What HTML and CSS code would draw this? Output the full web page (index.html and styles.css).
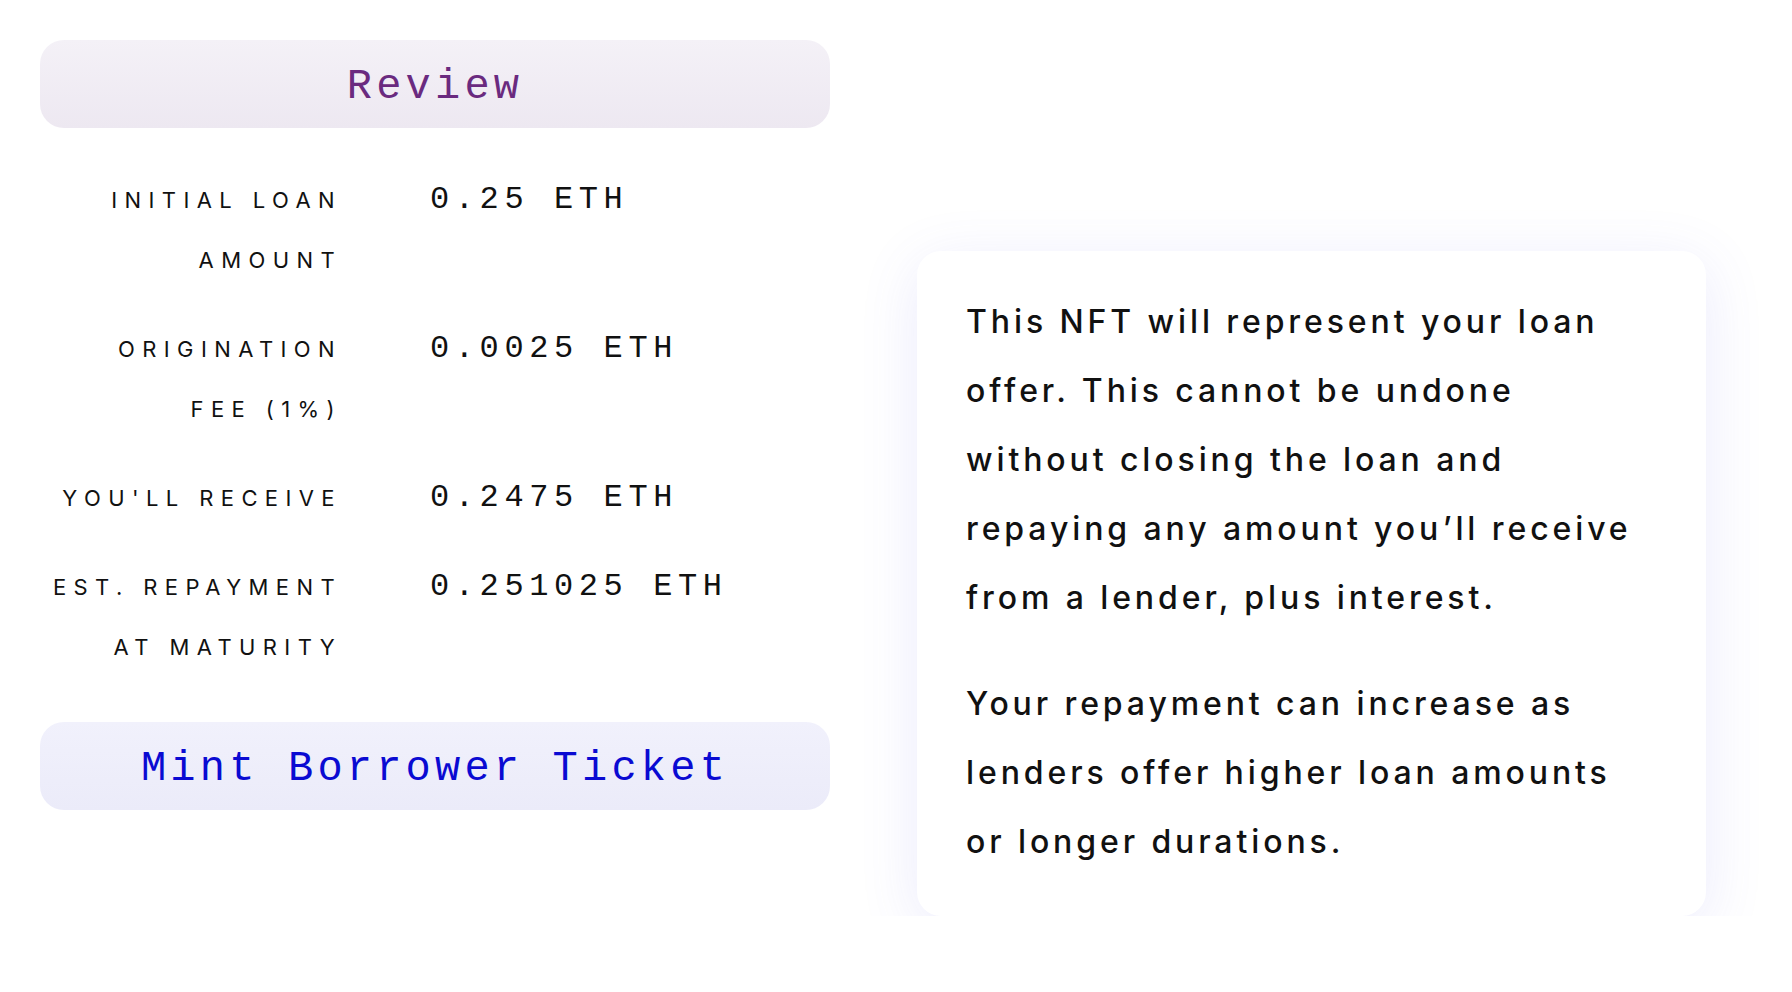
FILE: index.html
```html
<!DOCTYPE html>
<html lang="en">
<head>
<meta charset="utf-8">
<title>Review</title>
<link rel="stylesheet" href="styles.css">
</head>
<body>
<main class="page">
  <section class="review">
    <div class="pill pill-review">Review</div>
    <dl class="summary">
      <dt class="label"><span class="ln">Initial loan</span><span class="ln">amount</span></dt>
      <dd class="value">0.25 ETH</dd>
      <dt class="label"><span class="ln">Origination</span><span class="ln">fee (1%)</span></dt>
      <dd class="value">0.0025 ETH</dd>
      <dt class="label"><span class="ln">You'll receive</span></dt>
      <dd class="value">0.2475 ETH</dd>
      <dt class="label"><span class="ln">Est. repayment</span><span class="ln">at maturity</span></dt>
      <dd class="value">0.251025 ETH</dd>
    </dl>
    <button class="pill pill-mint" type="button">Mint Borrower Ticket</button>
  </section>
  <aside class="note">
    <p>This NFT will represent your loan<br>offer. This cannot be undone<br>without closing the loan and<br>repaying any amount you’ll receive<br>from a lender, plus interest.</p>
    <p>Your repayment can increase as<br>lenders offer higher loan amounts<br>or longer durations.</p>
  </aside>
</main>
</body>
</html>
```

FILE: styles.css
```css
* { box-sizing: border-box; }

html, body {
  margin: 0;
  padding: 0;
  background: #ffffff;
}

.page {
  display: flex;
  align-items: flex-start;
  gap: 87px;
  padding: 40px 0 0 40px;
}

.review {
  width: 790px;
  display: flex;
  flex-direction: column;
}

.pill {
  display: block;
  width: 100%;
  height: 88px;
  border: 0;
  border-radius: 24px;
  padding: 6px 0 0 0;
  margin: 0;
  font-family: "Liberation Mono", "DejaVu Sans Mono", monospace;
  font-size: 42px;
  line-height: 82px;
  letter-spacing: 4.2px;
  text-align: center;
}

.pill-review {
  color: #6a2a7f;
  background: linear-gradient(180deg, #f4f1f7 0%, #ede8f1 100%);
}

.pill-mint {
  color: #0a0ad2;
  background: linear-gradient(180deg, #f1f1fc 0%, #ebebf9 100%);
  cursor: pointer;
}

.summary {
  display: grid;
  grid-template-columns: 302px 1fr;
  column-gap: 88px;
  row-gap: 29px;
  align-items: baseline;
  margin: 42px 0 45px 0;
}

.label {
  margin: 0;
  text-align: right;
  font-family: "Inter", "Liberation Sans", sans-serif;
  font-size: 22px;
  font-weight: 400;
  line-height: 60px;
  letter-spacing: 7.4px;
  text-transform: uppercase;
  color: #111111;
}

.ln {
  display: block;
  white-space: nowrap;
}

.value {
  margin: 0;
  font-family: "Liberation Mono", "DejaVu Sans Mono", monospace;
  font-size: 32px;
  line-height: 32px;
  letter-spacing: 5.6px;
  color: #111111;
  white-space: nowrap;
}

.note {
  width: 789px;
  margin-top: 211px;
  padding: 36px 49px 40px 49px;
  background: #ffffff;
  border-radius: 24px;
  box-shadow: 0 12px 60px rgba(90, 90, 230, 0.12);
}

.note p {
  margin: 0;
  font-family: "Inter", "Liberation Sans", sans-serif;
  font-size: 32px;
  font-weight: 500;
  line-height: 69px;
  letter-spacing: 3.9px;
  color: #111111;
  white-space: nowrap;
}

.note p + p {
  margin-top: 37px;
}
```
